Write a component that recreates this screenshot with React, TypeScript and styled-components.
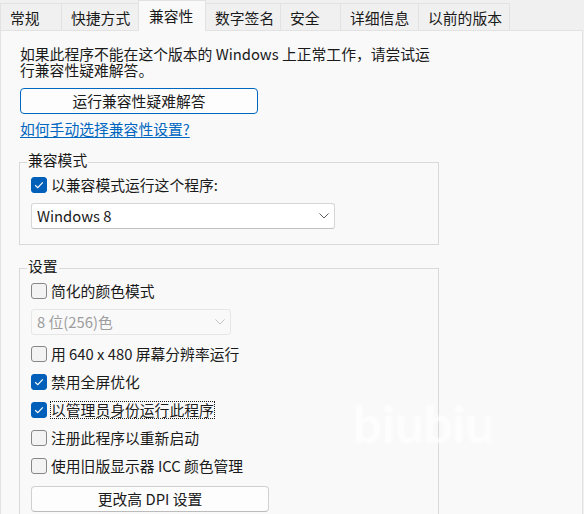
import React from 'react';
import styled, { createGlobalStyle } from 'styled-components';

const GlobalStyle = createGlobalStyle`
  html, body {
    margin: 0;
    padding: 0;
    background: #f0f0f0;
  }
  body {
    font-family: "Noto Sans CJK SC", "Noto Sans", sans-serif;
    font-size: 14.8px;
    color: #1a1a1a;
  }
`;

const Page = styled.div`
  position: relative;
  width: 584px;
  height: 514px;
  overflow: hidden;
  display: flex;
  flex-direction: column;
  background: #f0f0f0;
`;

const TabStrip = styled.div`
  display: flex;
  align-items: flex-end;
  height: 30px;
  flex-shrink: 0;
`;

const Tab = styled.div<{ $width: number; $active?: boolean }>`
  position: relative;
  z-index: ${p => (p.$active ? 1 : 0)};
  box-sizing: border-box;
  width: ${p => p.$width}px;
  height: ${p => (p.$active ? 31 : 27)}px;
  margin-right: -1px;
  margin-bottom: ${p => (p.$active ? -1 : 0)}px;
  padding: ${p => (p.$active ? '0 0 1px 10px' : '2px 0 0 9px')};
  display: flex;
  align-items: center;
  background: ${p => (p.$active ? '#f9f9f9' : '#f0f0f0')};
  border: 1px solid #e2e2e2;
  border-bottom: none;
  line-height: 18px;
  white-space: nowrap;
  color: #1a1a1a;
`;

const Panel = styled.div`
  flex: 1;
  box-sizing: border-box;
  width: 583px;
  background: #f9f9f9;
  border: 1px solid #e2e2e2;
  border-bottom: none;
  padding: 15px 0 0 19px;
  display: flex;
  flex-direction: column;
  align-items: flex-start;
`;

const IntroLine = styled.div`
  line-height: 16px;
  white-space: nowrap;
`;

const PushButton = styled.button<{ $primary?: boolean }>`
  box-sizing: border-box;
  width: 238px;
  height: 26px;
  margin: ${p => (p.$primary ? '10px 0 0 0' : '2px 0 0 0')};
  padding: 0;
  border: 1px solid ${p => (p.$primary ? '#0067c0' : '#d0d0d0')};
  border-bottom-color: ${p => (p.$primary ? '#0067c0' : '#bcbcbc')};
  border-radius: 4px;
  background: #fdfdfd;
  font: inherit;
  line-height: 18px;
  color: #1a1a1a;
  text-align: center;
`;

const HelpLink = styled.a`
  margin-top: 7px;
  line-height: 16px;
  color: #0067c0;
  text-decoration: underline;
  text-underline-offset: 2px;
`;

const Group = styled.fieldset<{ $gap: number }>`
  box-sizing: border-box;
  width: 420px;
  min-width: 0;
  margin: ${p => p.$gap}px 0 0 -1px;
  padding: 0;
  border: 1px solid #d9d9d9;
`;

const Legend = styled.legend`
  margin-left: 7px;
  padding: 0 1px 4px;
  line-height: 18px;
`;

const GroupBody = styled.div`
  display: flex;
  flex-direction: column;
  align-items: flex-start;
  gap: 8px;
  padding: 2px 11px 14px;
`;

const CheckRow = styled.div`
  display: flex;
  align-items: center;
  gap: 3px;
  height: 20px;
`;

const Box = styled.span<{ $checked?: boolean }>`
  box-sizing: border-box;
  width: 16px;
  height: 16px;
  border-radius: 3px;
  border: 1px solid ${p => (p.$checked ? '#005fb8' : '#878787')};
  background: ${p => (p.$checked ? '#005fb8' : '#f3f3f3')};
  display: flex;
  align-items: center;
  justify-content: center;
  flex-shrink: 0;
`;

const CheckLabel = styled.span<{ $focused?: boolean }>`
  padding: 0 1px;
  line-height: 18px;
  white-space: nowrap;
  outline: ${p => (p.$focused ? '1px dotted #1a1a1a' : 'none')};
  outline-offset: -1px;
`;

const Select = styled.div<{ $width: number; $disabled?: boolean }>`
  box-sizing: border-box;
  width: ${p => p.$width}px;
  height: 26px;
  margin-bottom: 1px;
  padding: 0 5px 0 5px;
  display: flex;
  align-items: center;
  justify-content: space-between;
  border: 1px solid ${p => (p.$disabled ? '#e6e6e6' : '#d6d6d6')};
  border-bottom-color: ${p => (p.$disabled ? '#e6e6e6' : '#c2c2c2')};
  border-radius: 3px;
  background: ${p => (p.$disabled ? '#f9f9f9' : '#ffffff')};
  color: ${p => (p.$disabled ? '#9d9d9d' : '#1a1a1a')};
  line-height: 18px;
`;

const Watermark = styled.span`
  position: absolute;
  left: 353px;
  top: 398px;
  font-family: Lato, "Open Sans", sans-serif;
  font-weight: 700;
  font-size: 51px;
  line-height: 51px;
  color: #ffffff;
  opacity: 0.75;
  filter: blur(0.8px);
  pointer-events: none;
`;

const tabs = [
  { label: '常规', width: 62 },
  { label: '快捷方式', width: 78 },
  { label: '兼容性', width: 68, active: true },
  { label: '数字签名', width: 76 },
  { label: '安全', width: 61 },
  { label: '详细信息', width: 79 },
  { label: '以前的版本', width: 92 },
];

function Chevron({ color }: { color: string }) {
  return (
    <svg width="10" height="6" viewBox="0 0 10 6">
      <path d="M0.5 0.5 L5 5 L9.5 0.5" fill="none" stroke={color} strokeWidth="1" />
    </svg>
  );
}

function CheckBox({ checked, label, focused }: { checked?: boolean; label: React.ReactNode; focused?: boolean }) {
  return (
    <CheckRow>
      <Box $checked={checked}>
        {checked && (
          <svg width="10" height="8" viewBox="0 0 10 8">
            <path d="M1.2 4.3 L3.8 6.6 L8.8 1.4" fill="none" stroke="#ffffff" strokeWidth="1.2" />
          </svg>
        )}
      </Box>
      <CheckLabel $focused={focused}>{label}</CheckLabel>
    </CheckRow>
  );
}

export default function App() {
  return (
    <Page>
      <GlobalStyle />
      <TabStrip>
        {tabs.map(t => (
          <Tab key={t.label} $width={t.width} $active={t.active}>
            {t.label}
          </Tab>
        ))}
      </TabStrip>
      <Panel>
        <IntroLine>如果此程序不能在这个版本的 Windows 上正常工作，请尝试运</IntroLine>
        <IntroLine>行兼容性疑难解答。</IntroLine>
        <PushButton $primary>运行兼容性疑难解答</PushButton>
        <HelpLink href="#">如何手动选择兼容性设置?</HelpLink>

        <Group $gap={14}>
          <Legend>兼容模式</Legend>
          <GroupBody>
            <CheckBox checked label="以兼容模式运行这个程序:" />
            <Select $width={304}>
              <span>Windows 8</span>
              <Chevron color="#5c5c5c" />
            </Select>
          </GroupBody>
        </Group>

        <Group $gap={12}>
          <Legend>设置</Legend>
          <GroupBody>
            <CheckBox label="简化的颜色模式" />
            <Select $width={200} $disabled>
              <span>8 位(256)色</span>
              <Chevron color="#c2c2c2" />
            </Select>
            <CheckBox label="用 640 x 480 屏幕分辨率运行" />
            <CheckBox checked label="禁用全屏优化" />
            <CheckBox checked focused label="以管理员身份运行此程序" />
            <CheckBox label="注册此程序以重新启动" />
            <CheckBox label="使用旧版显示器 ICC 颜色管理" />
            <PushButton>更改高 DPI 设置</PushButton>
          </GroupBody>
        </Group>
      </Panel>
      <Watermark>biubiu</Watermark>
    </Page>
  );
}
